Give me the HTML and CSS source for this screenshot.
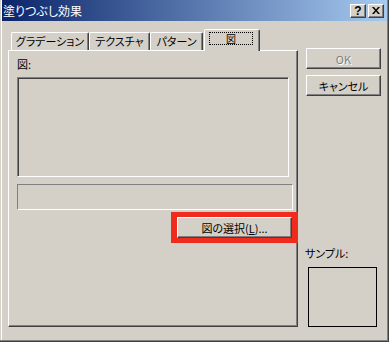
FILE: index.html
```html
<!DOCTYPE html>
<html>
<head>
    <title>塗りつぶし効果</title>
    <link rel="stylesheet" href="styles.css">
</head>
<body>
    <div class="window">
        <div class="titlebar">
            <span class="title">塗りつぶし効果</span>
            <span class="cap-btn cap-help">?</span>
            <span class="cap-btn cap-close">
                <svg width="8" height="7" viewBox="0 0 8 7"><path d="M0 0h2l2 2.4 2-2.4h2L5 3.5 8 7H6L4 4.6 2 7H0l3-3.5z" fill="#000"/></svg>
            </span>
        </div>

        <div class="client">
            <div class="sheet">
                <div class="tabstrip">
                    <div class="tab tab-grad">グラデーション</div>
                    <div class="tab tab-tex">テクスチャ</div>
                    <div class="tab tab-pat">パターン</div>
                    <div class="tab tab-pic active"><span class="focus">図</span></div>
                </div>
                <div class="panel">
                    <div class="label">図:</div>
                    <div class="preview"></div>
                    <div class="filename"></div>
                    <div class="select-row">
                        <div class="highlight">
                            <button class="btn btn-select">図の選択(<u>L</u>)...</button>
                        </div>
                    </div>
                </div>
            </div>

            <div class="side">
                <button class="btn btn-ok" disabled>OK</button>
                <button class="btn btn-cancel">キャンセル</button>
                <div class="spacer"></div>
                <div class="sample-label">サンプル:</div>
                <div class="sample-box"></div>
            </div>
        </div>
    </div>
</body>
</html>
```

FILE: styles.css
```css
body {
    margin: 0;
    background: #D4D0C8;
    font-family: "Noto Sans CJK JP", "Noto Sans", sans-serif;
    font-size: 11px;
    font-feature-settings: "palt";
    color: #000;
}
.window {
    width: 389px;
    height: 342px;
    box-sizing: border-box;
    padding: 0 2px 2px 2px;
    display: flex;
    flex-direction: column;
    box-shadow: inset -1px -1px #404040, inset -2px -2px #808080, inset 1px 0 #D4D0C8, inset 2px 0 #fff;
}
.titlebar {
    height: 21px;
    flex: none;
    display: flex;
    align-items: center;
    padding: 0 3px 0 1px;
    background: linear-gradient(to right, #0A246A, #A6CAF0);
}
.title {
    flex: 1;
    color: #fff;
    font-size: 12px;
    line-height: 14px;
}
.cap-btn {
    width: 16px;
    height: 14px;
    box-sizing: border-box;
    display: flex;
    align-items: center;
    justify-content: center;
    background: #D4D0C8;
    border: 1px solid;
    border-color: #fff #404040 #404040 #fff;
    box-shadow: inset -1px -1px #808080;
}
.cap-help {
    font-family: "Liberation Sans", sans-serif;
    font-weight: bold;
    font-size: 12px;
    line-height: 12px;
}
.cap-close {
    margin-left: 2px;
}
.client {
    flex: 1;
    display: flex;
    padding: 8px 0 13px 6px;
}
.sheet {
    width: 290px;
    display: flex;
    flex-direction: column;
}
.tabstrip {
    height: 21px;
    flex: none;
    display: flex;
    align-items: flex-end;
    padding-left: 3px;
}
.tab {
    height: 18px;
    box-sizing: border-box;
    border: 1px solid;
    border-bottom: 0;
    border-color: #fff #404040 #404040 #fff;
    border-radius: 2px 2px 0 0;
    box-shadow: inset -1px 0 #808080;
    text-align: center;
    line-height: 17px;
    white-space: nowrap;
}
.tab-grad { width: 78px; }
.tab-tex { width: 61px; }
.tab-pat { width: 53px; }
.tab-pic { width: 56px; margin-left: 1px; }
.tab.active {
    height: 22px;
    margin-bottom: -1px;
    position: relative;
    z-index: 1;
    background: #D4D0C8;
    padding-top: 2px;
    display: flex;
    justify-content: center;
    align-items: flex-start;
}
.focus {
    width: 44px;
    height: 13px;
    box-sizing: border-box;
    border: 1px dotted #000;
    display: flex;
    align-items: center;
    justify-content: center;
    font-size: 10px;
    line-height: 11px;
    margin-left: -2px;
}
.panel {
    flex: 1;
    box-sizing: border-box;
    border: 1px solid;
    border-color: #fff #404040 #404040 #fff;
    box-shadow: inset -1px -1px #808080;
    padding: 6px 0 0 8px;
}
.label {
    height: 14px;
    line-height: 14px;
    margin-bottom: 6px;
}
.preview {
    width: 272px;
    height: 100px;
    box-sizing: border-box;
    border: 1px solid;
    border-color: #808080 #fff #fff #808080;
    box-shadow: inset 1px 1px #404040, inset -1px -1px #D4D0C8;
}
.filename {
    width: 276px;
    height: 26px;
    margin-top: 7px;
    box-sizing: border-box;
    border: 1px solid;
    border-color: #808080 #fff #fff #808080;
}
.select-row {
    display: flex;
    justify-content: flex-end;
    margin-top: 2px;
    margin-right: -1px;
}
.highlight {
    display: flex;
    border-style: solid;
    border-width: 5px 6px;
    border-color: #EE2B1C;
}
.btn {
    box-sizing: border-box;
    height: 21px;
    margin: 0;
    padding: 0;
    background: #D4D0C8;
    border: 1px solid;
    border-color: #fff #404040 #404040 #fff;
    box-shadow: inset -1px -1px #808080;
    font: inherit;
    font-feature-settings: "palt";
    line-height: 18px;
    color: #000;
}
.btn-select {
    width: 115px;
}
.side {
    width: 75px;
    margin-left: 8px;
    display: flex;
    flex-direction: column;
}
.btn-ok {
    margin-top: 19px;
    color: #808080;
    text-shadow: 1px 1px #fff;
}
.btn-cancel {
    margin-top: 6px;
}
.spacer {
    flex: 1;
}
.sample-label {
    height: 14px;
    line-height: 14px;
    margin: 0 0 7px -1px;
}
.sample-box {
    width: 69px;
    height: 60px;
    margin-left: 2px;
    box-sizing: border-box;
    border: 1px solid #000;
}
```
